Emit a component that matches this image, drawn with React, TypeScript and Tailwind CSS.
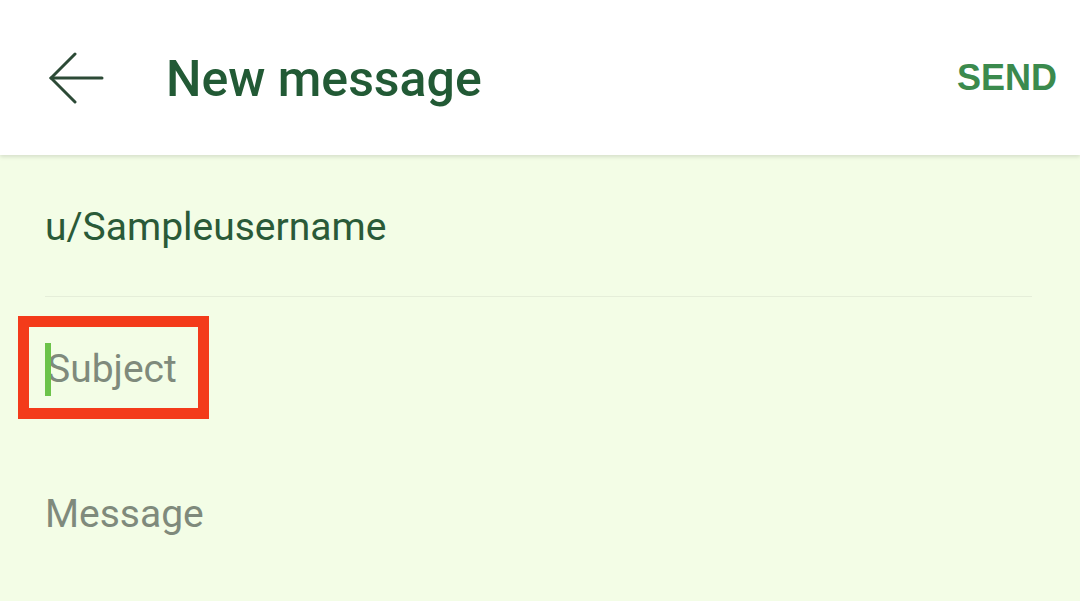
export default function App() {
  return (
    <div className="w-[1080px] h-[601px] overflow-hidden bg-[#f3fde6] font-['Roboto',sans-serif]">
      {/* Header */}
      <header className="h-[155px] bg-white flex items-center shadow-[0_2px_4px_rgba(0,0,0,0.12)] relative z-10">
        <div className="w-[166px] pl-[49px] flex items-center">
          <svg width="56" height="52" viewBox="0 0 56 52" fill="none" stroke="#2c4a36" strokeWidth="3" strokeLinecap="round">
            <path d="M2 26H53" />
            <path d="M26 2L2 26L26 50" />
          </svg>
        </div>
        <h1 className="flex-1 text-[50px] font-medium text-[#225a35] leading-none pt-[2px]">New message</h1>
        <button className="pr-[23px] text-[36px] font-bold text-[#3b8a4d] font-['Liberation_Sans',sans-serif] leading-none">SEND</button>
      </header>

      {/* Form */}
      <div className="px-[45px]">
        <div className="h-[142px] flex items-center border-b border-[#e5eed9] mr-[3px] pt-[4px]">
          <span className="text-[39px] text-[#2a5a38] leading-none">u/Sampleusername</span>
        </div>
        <div className="h-[145px] flex items-center relative">
          <div className="absolute left-[-27px] top-[19px] w-[191px] h-[103px] border-[11px] border-[#f33b1a]" />
          <span className="w-[6px] h-[53px] bg-[#6cc34a] mr-[-4px] relative z-10" />
          <span className="text-[39px] text-[#7f8a7c] leading-none">Subject</span>
        </div>
        <div className="h-[145px] flex items-center">
          <span className="text-[39px] text-[#7f8a7c] leading-none">Message</span>
        </div>
      </div>
    </div>
  );
}
